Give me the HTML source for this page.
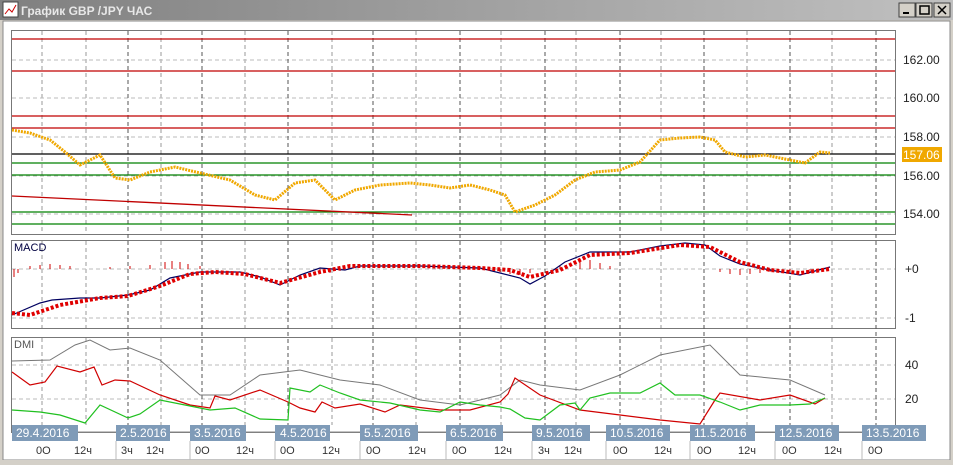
<!DOCTYPE html><html><head><style>
body{margin:0;width:953px;height:460px;overflow:hidden;background:#d4d0c8;font-family:"Liberation Sans",sans-serif}
</style></head><body>
<svg width="953" height="460" xmlns="http://www.w3.org/2000/svg" font-family="Liberation Sans, sans-serif">
<defs><linearGradient id="tb" x1="0" y1="0" x2="1" y2="0"><stop offset="0" stop-color="#808080"/><stop offset="1" stop-color="#c0c0c0"/></linearGradient></defs>
<rect x="0" y="0" width="953" height="460" fill="#d4d0c8"/>
<rect x="0" y="0" width="953" height="20" fill="url(#tb)"/>
<rect x="3" y="2" width="15" height="15" fill="#fff" stroke="#444"/>
<path d="M5 14 L9 9 L12 12 L16 5" stroke="#c00" fill="none"/>
<text x="21" y="15" font-size="12" font-weight="bold" fill="#e8e8e8">График GBP /JPY  ЧАС</text>
<g fill="#d4d0c8" stroke="#404040"><rect x="899" y="3" width="16" height="14"/><rect x="916" y="3" width="16" height="14"/><rect x="934" y="3" width="16" height="14"/></g>
<path d="M903 13h6" stroke="#000" stroke-width="2"/><rect x="920" y="6" width="9" height="8" fill="none" stroke="#000" stroke-width="1.5"/>
<path d="M938 6l8 8M946 6l-8 8" stroke="#000" stroke-width="1.5"/>
<rect x="3" y="21" width="947" height="439" fill="#fff" stroke="#888"/>
<!-- panels -->
<g fill="#fff" stroke="#777"><rect x="11.5" y="30.5" width="884" height="204"/><rect x="11.5" y="240.5" width="884" height="88"/><rect x="11.5" y="337.5" width="884" height="95"/></g>
<g stroke="#999" stroke-dasharray="4,3" stroke-width="1">
<path d="M42 31V234M86 31V234M161 31V234M245 31V234M332 31V234M416 31V234M501 31V234M576 31V234M661 31V234M747 31V234M832 31V234"/>
<path d="M42 241V328M86 241V328M161 241V328M245 241V328M332 241V328M416 241V328M501 241V328M576 241V328M661 241V328M747 241V328M832 241V328"/>
<path d="M42 338V425M86 338V425M161 338V425M245 338V425M332 338V425M416 338V425M501 338V425M576 338V425M661 338V425M747 338V425M832 338V425"/>
<path d="M12 60H895M12 98H895M12 137H895M12 176H895M12 214H895M12 269H895M12 318H895M12 365H895M12 399H895" stroke="#bbb"/>
</g>
<g stroke="#555" stroke-dasharray="4,3"><path d="M128 31V425M202 31V425M288 31V425M373 31V425M460 31V425M545 31V425M620 31V425M704 31V425M790 31V425M876 31V425"/></g>
<g stroke="#c00000" stroke-width="1.3"><path d="M12 39H895M12 71H895M12 116H895M12 128H895"/></g>
<path d="M12 154H895" stroke="#000" stroke-width="1.3"/>
<g stroke="#008000" stroke-width="1.3"><path d="M12 163H895M12 175H895M12 212H895M12 224H895"/></g>
<path d="M12 196L412 215" stroke="#c00000" stroke-width="1.3"/>
<polyline fill="none" stroke="#f0a800" stroke-width="3" stroke-dasharray="2,1" points="12,130 30,133 50,140 65,152 80,165 100,155 115,178 130,180 150,172 175,167 200,173 230,180 255,195 275,200 295,183 315,180 335,200 355,190 380,185 410,183 430,185 450,188 470,185 490,190 505,195 515,212 535,205 555,195 575,180 595,172 620,170 640,162 660,140 680,138 700,137 715,140 725,152 745,157 765,155 790,160 805,163 820,152 830,153"/>
<g font-size="12" fill="#222"><text x="903" y="64">162.00</text><text x="903" y="102">160.00</text><text x="903" y="141">158.00</text><text x="903" y="180">156.00</text><text x="903" y="218">154.00</text>
<text x="905" y="273">+0</text><text x="905" y="322">-1</text><text x="905" y="369">40</text><text x="905" y="403">20</text></g>
<rect x="902" y="147" width="40" height="15" fill="#f0a800"/><text x="903" y="159" font-size="12" fill="#fff">157.06</text>
<text x="14" y="251" font-size="11" fill="#000040">MACD</text>
<text x="14" y="348" font-size="11" fill="#555">DMI</text>
<!-- MACD -->
<path d="M14 269v8M18 269v4M30 269v-3M40 269v-4M50 269v-5M60 269v-4M70 269v-3M110 269v-2M130 269v-3M150 269v-4M165 269v-7M172 269v-8M180 269v-7M188 269v-5M200 269v-3M320 269v3M330 269v4M340 269v2M500 269v3M510 269v5M520 269v6M530 269v4M560 269v-4M580 269v-7M590 269v-9M600 269v-6M610 269v-3M720 269v3M730 269v5M740 269v6M750 269v5M760 269v4M770 269v3M790 269v2M810 269v3" stroke="#d00000" stroke-width="1"/>
<polyline fill="none" stroke="#000060" stroke-width="1.2" points="12,315 40,303 52,300 80,298 100,298 128,295 150,290 170,278 200,272 240,272 260,277 280,285 300,275 320,268 345,270 360,266 420,266 480,268 520,278 530,284 545,276 565,262 590,252 630,252 660,246 685,243 705,245 720,256 740,264 770,270 800,275 830,267"/>
<polyline fill="none" stroke="#e00000" stroke-width="4" stroke-dasharray="3,2" points="12,313 30,315 60,305 100,298 128,296 160,286 190,274 215,272 245,274 280,283 320,272 350,266 420,266 480,268 510,270 530,277 560,270 590,255 630,253 680,245 710,247 740,262 770,270 800,273 830,269"/>
<!-- DMI -->
<polyline fill="none" stroke="#777" stroke-width="1" points="12,361 50,360 75,345 90,340 110,350 130,348 160,360 200,395 230,395 260,375 300,370 340,380 380,385 420,400 460,405 500,395 520,380 540,385 580,390 620,375 660,355 710,345 740,375 790,380 825,395"/>
<polyline fill="none" stroke="#d00000" stroke-width="1.2" points="12,372 30,385 45,382 57,366 80,372 94,367 102,385 115,380 130,381 160,395 190,405 210,408 215,396 230,400 260,390 288,402 300,408 315,412 322,402 335,408 360,404 385,412 400,405 440,410 470,410 500,402 508,394 515,378 540,395 580,410 620,415 660,420 700,424 715,400 720,393 760,400 790,395 815,404 825,398"/>
<polyline fill="none" stroke="#20c020" stroke-width="1.2" points="12,410 40,412 60,415 85,423 100,405 128,418 140,414 160,400 185,405 210,410 235,408 260,419 288,420 290,388 310,392 320,385 340,393 360,400 390,403 420,410 440,412 460,402 480,405 500,407 510,409 525,418 540,420 560,405 575,403 580,410 590,398 610,393 640,393 660,383 675,395 700,395 720,402 740,410 760,405 790,405 810,404 825,398"/>
<!-- date bar -->
<path d="M12 432H895" stroke="#888"/>
<g fill="#7f9bb8"><rect x="12" y="425" width="66" height="16"/><rect x="116" y="425" width="54" height="16"/><rect x="190" y="425" width="56" height="16"/><rect x="275" y="425" width="55" height="16"/><rect x="360" y="425" width="58" height="16"/><rect x="446" y="425" width="57" height="16"/><rect x="532" y="425" width="58" height="16"/><rect x="606" y="425" width="64" height="16"/><rect x="690" y="425" width="65" height="16"/><rect x="775" y="425" width="64" height="16"/><rect x="862" y="425" width="64" height="16"/></g>
<g font-size="12" fill="#fff"><text x="16" y="437">29.4.2016</text><text x="120" y="437">2.5.2016</text><text x="194" y="437">3.5.2016</text><text x="280" y="437">4.5.2016</text><text x="364" y="437">5.5.2016</text><text x="450" y="437">6.5.2016</text><text x="536" y="437">9.5.2016</text><text x="610" y="437">10.5.2016</text><text x="694" y="437">11.5.2016</text><text x="779" y="437">12.5.2016</text><text x="866" y="437">13.5.2016</text></g>
<g stroke="#bbb"><path d="M116 441V460M190 441V460M275 441V460M360 441V460M446 441V460M532 441V460M606 441V460M690 441V460M775 441V460M862 441V460"/></g>
<g font-size="11" fill="#333"><text x="36" y="454">0O</text><text x="74" y="454">12ч</text><text x="121" y="454">3ч</text><text x="146" y="454">12ч</text><text x="195" y="454">0O</text><text x="236" y="454">12ч</text><text x="280" y="454">0O</text><text x="322" y="454">12ч</text><text x="366" y="454">0O</text><text x="408" y="454">12ч</text><text x="452" y="454">0O</text><text x="494" y="454">12ч</text><text x="538" y="454">3ч</text><text x="564" y="454">12ч</text><text x="613" y="454">0O</text><text x="654" y="454">12ч</text><text x="697" y="454">0O</text><text x="738" y="454">12ч</text><text x="782" y="454">0O</text><text x="824" y="454">12ч</text><text x="868" y="454">0O</text></g>
</svg>
</body></html>
